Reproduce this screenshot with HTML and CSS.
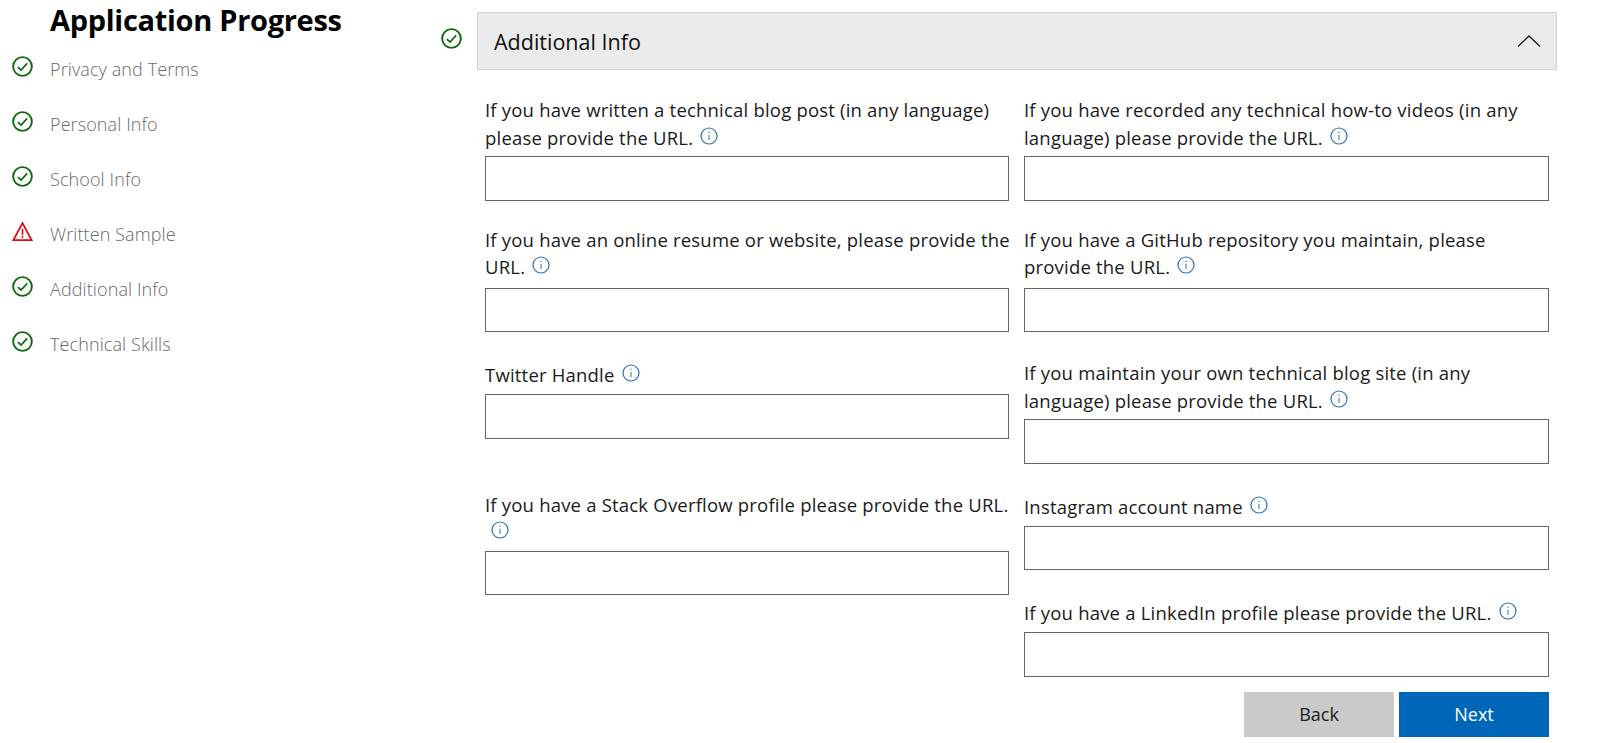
FILE: index.html
```html
<!DOCTYPE html>
<html lang="en">
  <head>
    <meta charset="UTF-8" />
    <title>Application Progress</title>
    <link rel="stylesheet" href="styles.css">
  </head>
  <body>
    <svg class="defs" width="0" height="0">
      <symbol id="check" viewBox="0 0 22 22">
        <circle cx="11" cy="11" r="9.8" fill="none" stroke="#0b6a0b" stroke-width="2"/>
        <path d="M6.2 11.6l3.3 3.2 6.4-7" fill="none" stroke="#0b6a0b" stroke-width="1.8"/>
      </symbol>
      <symbol id="warn" viewBox="0 0 22 22">
        <path d="M11 2.2L20.6 20H1.4z" fill="none" stroke="#d50d18" stroke-width="1.9"/>
        <path d="M11 8.2v6.6M11 15.8v2" fill="none" stroke="#d50d18" stroke-width="1.6"/>
      </symbol>
      <symbol id="info" viewBox="0 0 18 18">
        <circle cx="9" cy="9" r="8" fill="none" stroke="#2f6fb0" stroke-width="1.2"/>
        <path d="M9 7.8v5.2M9 4.6v1.4" fill="none" stroke="#2f6fb0" stroke-width="1"/>
      </symbol>
    </svg>

    <div class="page">
      <aside class="sidebar">
        <h2>Application Progress</h2>
        <ul class="steps">
          <li><svg class="step-icon"><use href="#check"/></svg><span>Privacy and Terms</span></li>
          <li><svg class="step-icon"><use href="#check"/></svg><span>Personal Info</span></li>
          <li><svg class="step-icon"><use href="#check"/></svg><span>School Info</span></li>
          <li><svg class="step-icon"><use href="#warn"/></svg><span>Written Sample</span></li>
          <li><svg class="step-icon"><use href="#check"/></svg><span>Additional Info</span></li>
          <li><svg class="step-icon"><use href="#check"/></svg><span>Technical Skills</span></li>
        </ul>
      </aside>

      <main class="main">
        <svg class="section-icon"><use href="#check"/></svg>
        <div class="section">
          <div class="section-head">
            <h3>Additional Info</h3>
            <svg class="chevron" viewBox="0 0 24 12"><path d="M1 11.5L12 1l11 10.5" fill="none" stroke="#1a1a1a" stroke-width="1.3"/></svg>
          </div>

          <form class="fields">
            <div class="col">
              <div class="field">
                <label>If you have written a technical blog post (in any language)<br>please provide the URL. <svg class="info"><use href="#info"/></svg></label>
                <input type="text">
              </div>
              <div class="field raised">
                <label>If you have an online resume or website, please provide the<br>URL. <svg class="info"><use href="#info"/></svg></label>
                <input type="text">
              </div>
              <div class="field one-line">
                <label>Twitter Handle <svg class="info"><use href="#info"/></svg></label>
                <input type="text">
              </div>
              <div class="field far">
                <label>If you have a Stack Overflow profile please provide the URL.<br><svg class="info"><use href="#info"/></svg></label>
                <input type="text">
              </div>
            </div>

            <div class="col">
              <div class="field">
                <label>If you have recorded any technical how-to videos (in any<br>language) please provide the URL. <svg class="info"><use href="#info"/></svg></label>
                <input type="text">
              </div>
              <div class="field raised">
                <label>If you have a GitHub repository you maintain, please<br>provide the URL. <svg class="info"><use href="#info"/></svg></label>
                <input type="text">
              </div>
              <div class="field">
                <label>If you maintain your own technical blog site (in any<br>language) please provide the URL. <svg class="info"><use href="#info"/></svg></label>
                <input type="text">
              </div>
              <div class="field one-line">
                <label>Instagram account name <svg class="info"><use href="#info"/></svg></label>
                <input type="text">
              </div>
              <div class="field one-line">
                <label>If you have a LinkedIn profile please provide the URL. <svg class="info"><use href="#info"/></svg></label>
                <input type="text">
              </div>
              <div class="buttons">
                <button type="button" class="btn back">Back</button>
                <button type="button" class="btn next">Next</button>
              </div>
            </div>
          </form>
        </div>
      </main>
    </div>
  </body>
</html>
```

FILE: styles.css
```css
*{
    margin: 0;
    padding: 0;
    box-sizing: border-box;
}
html, body{
    height: 743px;
    overflow: hidden;
}
body{
    background: white;
    color: #1a1a1a;
    font-family: 'Open Sans', 'Noto Sans', sans-serif;
}
.defs{
    position: absolute;
}
.page{
    display: flex;
}
.sidebar{
    width: 441px;
    flex: none;
}
.sidebar h2{
    padding: 0 0 0 50px;
    font-size: 29px;
    line-height: 40px;
    font-weight: 700;
    color: black;
    letter-spacing: -0.3px;
}
.steps{
    list-style: none;
    padding-top: 2px;
}
.steps li{
    display: flex;
    height: 55px;
    padding: 14px 0 0 12px;
}
.step-icon{
    width: 21px;
    height: 21px;
    flex: none;
}
.steps span{
    margin: 1px 0 0 17px;
    font-size: 18px;
    line-height: 24px;
    font-weight: 300;
    color: #6a6a6a;
    letter-spacing: 0.1px;
}
.main{
    display: flex;
    flex: none;
    width: 1116px;
    padding-top: 12px;
}
.section-icon{
    width: 21px;
    height: 21px;
    margin: 16px 15px 0 0;
    flex: none;
}
.section{
    width: 1080px;
}
.section-head{
    display: flex;
    justify-content: space-between;
    align-items: center;
    height: 58px;
    padding: 0 15px 0 16px;
    background: #ebebeb;
    border: 1px solid #d2d2d2;
}
.section-head h3{
    font-size: 21.5px;
    font-weight: 400;
    color: #111;
}
.chevron{
    width: 24px;
    height: 12px;
}
.fields{
    display: flex;
    gap: 15px;
    padding: 27px 8px 0;
}
.col{
    display: flex;
    flex-direction: column;
    flex: 1;
}
.col:first-child{
    flex: none;
    width: 524px;
}
.field{
    margin-top: -1px;
    margin-bottom: 28px;
}
.field.raised{
    margin-top: -3px;
}
.field.one-line{
    margin-top: 1px;
}
.field.far{
    margin-top: 24px;
}
.field label{
    display: block;
    height: 60px;
    font-size: 18.5px;
    line-height: 27.5px;
    letter-spacing: 0.2px;
    white-space: nowrap;
}
.field.raised label{
    height: 62px;
}
.field.one-line label{
    height: 33px;
}
.info{
    width: 18px;
    height: 18px;
    margin-left: 2px;
    vertical-align: 0;
}
.far .info{
    margin-left: 6px;
}
.field input{
    display: block;
    width: 100%;
    height: 44.6px;
    border: 1px solid #666;
    background: white;
}
.buttons{
    display: flex;
    justify-content: flex-end;
    gap: 5px;
    margin-top: -13px;
}
.btn{
    width: 150px;
    height: 45px;
    border: none;
    font-family: inherit;
    font-size: 18px;
}
.back{
    background: #cacaca;
    color: #1a1a1a;
}
.next{
    background: #0067b8;
    color: white;
}
```
